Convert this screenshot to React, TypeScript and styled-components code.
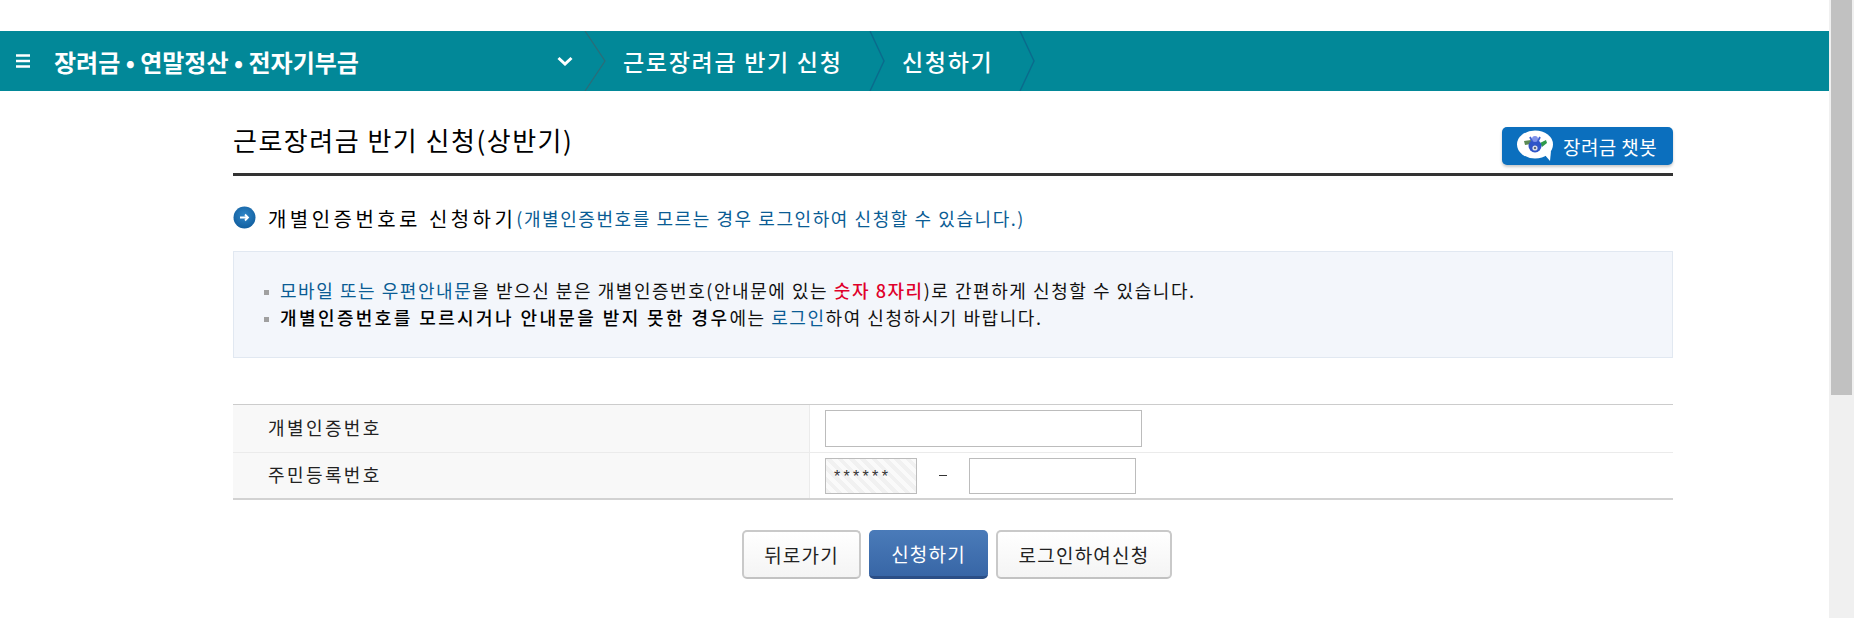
import { createGlobalStyle } from "styled-components";
import styled from "styled-components";

const GlobalStyle = createGlobalStyle`
  html, body {
    margin: 0;
    padding: 0;
    height: 618px;
    overflow: hidden;
    background: #fff;
  }
  * {
    box-sizing: border-box;
  }
  body {
    font-family: "Noto Sans CJK KR", "Noto Sans", sans-serif;
    color: #111;
  }
`;

const Page = styled.div`
  display: flex;
  width: 1854px;
  height: 618px;
`;

const Main = styled.div`
  width: 1829px;
  padding-top: 31px;
`;

const ScrollTrack = styled.div`
  width: 25px;
  height: 618px;
  padding: 0 2px;
  background: #f0f0f0;
`;

const ScrollThumb = styled.div`
  height: 395px;
  background: #c1c1c1;
`;

const Band = styled.nav`
  display: flex;
  align-items: center;
  height: 60px;
  background: #028898;
  color: #fff;
`;

const MenuIcon = styled.svg`
  flex: none;
  width: 16px;
  height: 16px;
  margin-left: 15px;
`;

const BandTitle = styled.div`
  width: 503px;
  margin-left: 23px;
  font-size: 24px;
  font-weight: 700;
  white-space: nowrap;
`;

const Chevron = styled.svg`
  flex: none;
  width: 16px;
  height: 10px;
`;

const Arrow = styled.svg<{ $wide?: boolean }>`
  flex: none;
  width: ${(p) => (p.$wide ? 22 : 16)}px;
  height: 60px;
  margin-left: ${(p) => (p.$wide ? 11 : 0)}px;
`;

const Crumb = styled.div<{ $width: number }>`
  width: ${(p) => p.$width}px;
  padding-left: 17px;
  font-size: 23px;
  font-weight: 500;
  letter-spacing: 1.7px;
  white-space: nowrap;
`;

const Content = styled.main`
  width: 1440px;
  margin-left: 233px;
`;

const Header = styled.header`
  display: flex;
  justify-content: space-between;
  align-items: flex-end;
  height: 85px;
  padding-bottom: 8px;
  border-bottom: 3px solid #333;
`;

const Title = styled.h1`
  margin: 0 0 10px;
  font-size: 26px;
  line-height: 30px;
  font-weight: 400;
  letter-spacing: 1.5px;
  color: #000;
`;

const ChatButton = styled.button`
  display: flex;
  align-items: center;
  width: 171px;
  height: 38px;
  padding: 0 0 0 15px;
  border: 0;
  border-radius: 5px;
  background: #0b6fbe;
  box-shadow: 0 2px 3px rgba(0, 0, 0, 0.22);
  color: #fff;
  font-family: inherit;
  font-size: 19px;
  letter-spacing: 0.4px;
`;

const ChatIcon = styled.svg`
  flex: none;
  width: 38px;
  height: 32px;
  margin-right: 8px;
`;

const SectionRow = styled.div`
  display: flex;
  align-items: center;
  height: 24px;
  margin-top: 29px;
  white-space: nowrap;
`;

const SectionIcon = styled.svg`
  flex: none;
  width: 23px;
  height: 23px;
  margin-right: 12px;
`;

const SectionTitle = styled.h2`
  margin: 2px 0 0;
  font-size: 20px;
  font-weight: 400;
  letter-spacing: 3.45px;
  color: #000;
`;

const SectionNote = styled.span`
  margin-top: 2px;
  font-size: 18px;
  letter-spacing: 1.57px;
  color: #0a5c94;
`;

const InfoBox = styled.div`
  height: 107px;
  margin-top: 22px;
  padding: 25px 0 26px 30px;
  border: 1px solid #e1e8f1;
  background: #f3f6fb;
`;

const InfoLine = styled.p`
  margin: 0;
  font-size: 18px;
  line-height: 27px;
  letter-spacing: 1.55px;
  white-space: nowrap;
  color: #111;

  &::before {
    content: "";
    display: inline-block;
    width: 5px;
    height: 5px;
    margin-right: 11px;
    vertical-align: 3px;
    background: #a0a0a0;
  }
`;

const LinkText = styled.span`
  color: #0a5c94;
`;

const Strong = styled.b`
  font-weight: 500;
  letter-spacing: 2.4px;
  color: #000;
`;

const Red = styled.span`
  color: #e0002a;
  font-weight: 500;
`;

const FormTable = styled.div`
  margin-top: 46px;
  border-top: 1px solid #ccc;
  border-bottom: 2px solid #d2d2d2;
`;

const FormRow = styled.div<{ $height: number; $last?: boolean }>`
  display: flex;
  height: ${(p) => p.$height}px;
  border-bottom: ${(p) => (p.$last ? "0" : "1px solid #ebebeb")};
`;

const FormLabel = styled.div`
  display: flex;
  align-items: center;
  width: 577px;
  padding: 0 0 3px 35px;
  border-right: 1px solid #ebebeb;
  background: #f8f8f8;
  font-size: 18px;
  letter-spacing: 2.4px;
  color: #222;
`;

const FormValue = styled.div`
  display: flex;
  align-items: center;
  flex: 1;
  padding-left: 15px;
`;

const TextBox = styled.div<{ $width: number; $height: number }>`
  width: ${(p) => p.$width}px;
  height: ${(p) => p.$height}px;
  border: 1px solid #bcbcbc;
  background: #fff;
`;

const MaskedBox = styled.div`
  width: 92px;
  height: 36px;
  padding-left: 8px;
  border: 1px solid #bcbcbc;
  background: repeating-linear-gradient(45deg, #f1f1f1 0 4px, #fafafa 4px 8px);
  font-family: "Liberation Sans", sans-serif;
  font-size: 16px;
  line-height: 36px;
  letter-spacing: 3.3px;
  color: #333;
`;

const Dash = styled.span`
  width: 8px;
  height: 1px;
  margin: 0 22px;
  background: #333;
`;

const ButtonRow = styled.div`
  display: flex;
  justify-content: center;
  gap: 8px;
  margin-top: 30px;
  padding-left: 8px;
`;

const ActionButton = styled.button<{ $width: number; $primary?: boolean }>`
  width: ${(p) => p.$width}px;
  height: 49px;
  padding: 0;
  border-radius: 5px;
  border: ${(p) => (p.$primary ? "0" : "2px solid #c9c9c9")};
  border-bottom: ${(p) => (p.$primary ? "3px solid #2b4e86" : "2px solid #c2c2c2")};
  background: ${(p) =>
    p.$primary
      ? "linear-gradient(#4a7bb9, #3866a6)"
      : "linear-gradient(#fff, #f4f4f4)"};
  color: ${(p) => (p.$primary ? "#fff" : "#222")};
  font-family: inherit;
  font-size: 19px;
  letter-spacing: 1.2px;
`;

function App() {
  return (
    <>
      <GlobalStyle />
      <Page>
        <Main>
          <Band>
            <MenuIcon viewBox="0 0 16 16">
              <path d="M1 2.5h14M1 8h14M1 13.5h14" stroke="#fff" strokeWidth="2.4" />
            </MenuIcon>
            <BandTitle>장려금 • 연말정산 • 전자기부금</BandTitle>
            <Chevron viewBox="0 0 16 10">
              <path d="M1.5 2l6.5 6 6.5-6" fill="none" stroke="#fff" strokeWidth="3" />
            </Chevron>
            <Arrow $wide viewBox="0 0 22 60">
              <path d="M1 0l20 30L1 60" fill="none" stroke="#2c6c78" strokeWidth="1.2" />
            </Arrow>
            <Crumb $width={263}>근로장려금 반기 신청</Crumb>
            <Arrow viewBox="0 0 16 60">
              <path d="M1 0l14 30L1 60" fill="none" stroke="#0b6a8c" strokeWidth="1.4" />
            </Arrow>
            <Crumb $width={134}>신청하기</Crumb>
            <Arrow viewBox="0 0 16 60">
              <path d="M1 0l14 30L1 60" fill="none" stroke="#0b6a8c" strokeWidth="1.4" />
            </Arrow>
          </Band>
          <Content>
            <Header>
              <Title>근로장려금 반기 신청(상반기)</Title>
              <ChatButton>
                <ChatIcon viewBox="0 0 38 32">
                  <ellipse cx="18" cy="14.5" rx="18" ry="14" fill="#fff" />
                  <path d="M27 24l6 7 1-10z" fill="#fff" />
                  <path d="M7 11l7-1v4l-6 1z" fill="#5c8a54" />
                  <path d="M23 13l6-3 1 3-5 4z" fill="#2f9a4a" />
                  <circle cx="18" cy="16" r="6.5" fill="#2f55c8" />
                  <circle cx="18" cy="9" r="3" fill="#7f92ea" />
                  <path d="M13 7l2 4M23 7l-2 4" stroke="#3f5fd0" strokeWidth="1.8" />
                  <circle cx="18" cy="18" r="2.6" fill="#d8dde8" />
                  <circle cx="18" cy="18" r="1.1" fill="#49505e" />
                </ChatIcon>
                장려금 챗봇
              </ChatButton>
            </Header>
            <SectionRow>
              <SectionIcon viewBox="0 0 23 23">
                <defs>
                  <radialGradient id="ball" cx="50%" cy="40%" r="60%">
                    <stop offset="0%" stopColor="#2f86c8" />
                    <stop offset="100%" stopColor="#125f9f" />
                  </radialGradient>
                </defs>
                <circle cx="11.5" cy="11.5" r="11" fill="url(#ball)" />
                <path d="M7 11.5h8M12 8.5l3 3-3 3" fill="none" stroke="#fff" strokeWidth="1.8" />
              </SectionIcon>
              <SectionTitle>개별인증번호로 신청하기</SectionTitle>
              <SectionNote>(개별인증번호를 모르는 경우 로그인하여 신청할 수 있습니다.)</SectionNote>
            </SectionRow>
            <InfoBox>
              <InfoLine>
                <LinkText>모바일 또는 우편안내문</LinkText>을 받으신 분은 개별인증번호(안내문에 있는{" "}
                <Red>숫자 8자리</Red>)로 간편하게 신청할 수 있습니다.
              </InfoLine>
              <InfoLine>
                <Strong>개별인증번호를 모르시거나 안내문을 받지 못한 경우</Strong>에는{" "}
                <LinkText>로그인</LinkText>하여 신청하시기 바랍니다.
              </InfoLine>
            </InfoBox>
            <FormTable>
              <FormRow $height={48}>
                <FormLabel>개별인증번호</FormLabel>
                <FormValue>
                  <TextBox $width={317} $height={37} />
                </FormValue>
              </FormRow>
              <FormRow $height={45} $last>
                <FormLabel>주민등록번호</FormLabel>
                <FormValue>
                  <MaskedBox>******</MaskedBox>
                  <Dash />
                  <TextBox $width={167} $height={36} />
                </FormValue>
              </FormRow>
            </FormTable>
            <ButtonRow>
              <ActionButton $width={119}>뒤로가기</ActionButton>
              <ActionButton $width={119} $primary>
                신청하기
              </ActionButton>
              <ActionButton $width={176}>로그인하여신청</ActionButton>
            </ButtonRow>
          </Content>
        </Main>
        <ScrollTrack>
          <ScrollThumb />
        </ScrollTrack>
      </Page>
    </>
  );
}

export default App;
